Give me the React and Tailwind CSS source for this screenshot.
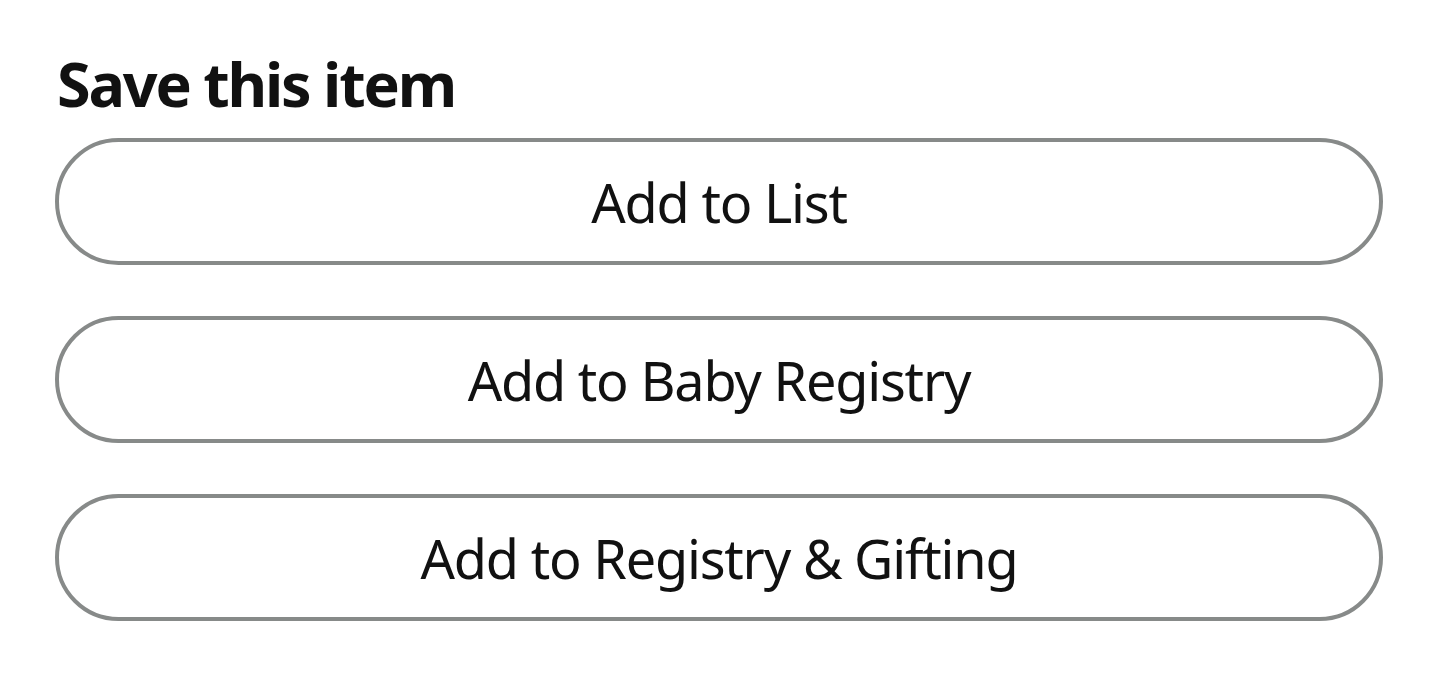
import React from "react";

const actions = ["Add to List", "Add to Baby Registry", "Add to Registry & Gifting"];

export default function App() {
  return (
    <div className="min-h-screen bg-white px-[55px] pt-[44px] font-['Noto_Sans',sans-serif] text-[#111]">
      <h2 className="pl-[2px] text-[61px] font-bold leading-[80px] tracking-[-2.2px]">
        Save this item
      </h2>
      <div className="mt-[14px] flex flex-col gap-[51px]">
        {actions.map((label) => (
          <button
            key={label}
            className="flex h-[127px] w-full items-center justify-center rounded-full border-4 border-[#878a89] bg-white text-[54px] leading-none tracking-[-1.2px]"
          >
            {label}
          </button>
        ))}
      </div>
    </div>
  );
}
